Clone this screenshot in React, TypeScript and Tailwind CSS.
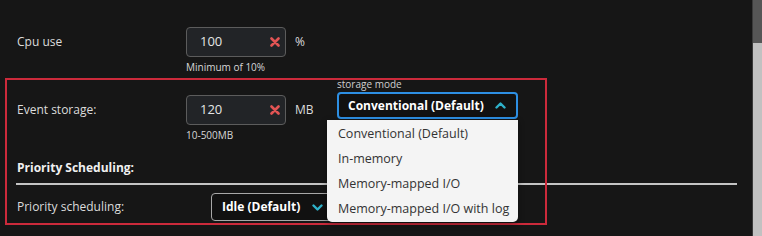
import React from "react";

function ClearIcon() {
  return (
    <svg width="10" height="10" viewBox="0 0 10 10" className="shrink-0">
      <path d="M1.5 1.5 L8.5 8.5 M8.5 1.5 L1.5 8.5" stroke="#e25454" strokeWidth="2.6" strokeLinecap="round" />
    </svg>
  );
}

function Chevron({ up }: { up?: boolean }) {
  return (
    <svg width="11" height="7" viewBox="0 0 11 7" className="shrink-0">
      <path
        d={up ? "M1.5 5.5 L5.5 1.5 L9.5 5.5" : "M1.5 1.5 L5.5 5.5 L9.5 1.5"}
        fill="none"
        stroke="#2eb1c9"
        strokeWidth="2.4"
        strokeLinecap="round"
        strokeLinejoin="round"
      />
    </svg>
  );
}

function NumberInput({ value, hint }: { value: string; hint: string }) {
  return (
    <div className="flex w-[100px] flex-col">
      <div className="flex h-[30px] items-center justify-between rounded-[4px] border border-[#5c5c5c] bg-[#222427] pl-[13px] pr-[5px]">
        <span className="text-[13px] text-[#e4e4e4]">{value}</span>
        <ClearIcon />
      </div>
      <span className="mt-[3px] whitespace-nowrap text-[10px] leading-[15px] text-[#d6d6d6]">{hint}</span>
    </div>
  );
}

const storageModes = [
  "Conventional (Default)",
  "In-memory",
  "Memory-mapped I/O",
  "Memory-mapped I/O with log",
];

export default function App() {
  return (
    <div className="relative flex h-[236px] w-[762px] overflow-hidden bg-[#161616] font-['Open_Sans',sans-serif] text-[12px] text-[#dcdcdc]">
      {/* ── Form ── */}
      <div className="flex flex-1 flex-col pl-[17px] pr-[15px] pt-[27px]">
        {/* Cpu use */}
        <div className="flex items-start">
          <span className="w-[169px] leading-[30px]">Cpu use</span>
          <NumberInput value="100" hint="Minimum of 10%" />
          <span className="ml-[9px] leading-[30px]">%</span>
        </div>

        {/* Event storage */}
        <div className="mt-[20px] flex items-start">
          <span className="w-[169px] leading-[30px]">Event storage:</span>
          <NumberInput value="120" hint="10-500MB" />
          <span className="ml-[9px] w-[42px] leading-[30px]">MB</span>
          <div className="relative -mt-[18px] flex flex-col">
            <span className="h-[14px] text-[10px] leading-[14px] text-[#cfcfcf]">storage mode</span>
            <div className="mt-[1px] flex h-[27px] w-[181px] items-center justify-between rounded-[4px] border-2 border-[#2d8fe3] bg-[#111] pl-[9px] pr-[10px]">
              <span className="font-bold text-white">Conventional (Default)</span>
              <Chevron up />
            </div>
            <div className="absolute right-0 top-full z-10 mt-[1px] w-[191px] rounded-b-[5px] bg-[#f4f4f4] pt-[2px] shadow-[0_2px_6px_rgba(0,0,0,0.4)]">
              {storageModes.map((m) => (
                <div key={m} className="flex h-[25px] items-center pl-[11px] text-[12.5px] text-[#333]">
                  {m}
                </div>
              ))}
            </div>
          </div>
        </div>

        {/* Priority Scheduling */}
        <span className="mt-[16px] font-bold leading-[18px] text-[#f0f0f0]">Priority Scheduling:</span>
        <div className="-ml-px mt-[6px] h-[2px] bg-[#c4c4c4]" />
        <div className="mt-[8px] flex items-center">
          <span className="w-[194px] leading-[28px]">Priority scheduling:</span>
          <div className="flex h-[28px] w-[126px] items-center rounded-[4px] border border-[#a8a8a8] bg-[#111] pl-[10px]">
            <span className="font-bold text-white">Idle (Default)</span>
            <span className="ml-[12px]">
              <Chevron />
            </span>
          </div>
        </div>
      </div>

      {/* ── Scrollbar ── */}
      <div className="flex w-[10px] flex-col border-l border-[#3a3a3a] bg-[#c1c1c1]">
        <div className="h-[43px] bg-[#565656]" />
      </div>

      {/* highlight box */}
      <div className="pointer-events-none absolute left-[5px] top-[78px] h-[147px] w-[542px] border-2 border-[#cc2a3b]" />
    </div>
  );
}
